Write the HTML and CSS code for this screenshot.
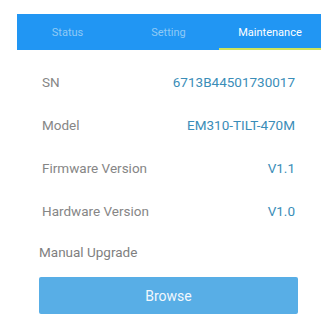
FILE: index.html
```html
<!DOCTYPE html>
<html>
<head>
<meta charset="utf-8">
<link rel="stylesheet" href="styles.css">
</head>
<body>
<div class="page">
  <div class="tabs">
    <div class="tab">Status</div>
    <div class="tab">Setting</div>
    <div class="tab active">Maintenance</div>
  </div>
  <div class="rows">
    <div class="row"><span class="label">SN</span><span class="value">6713B44501730017</span></div>
    <div class="row"><span class="label">Model</span><span class="value">EM310-TILT-470M</span></div>
    <div class="row"><span class="label">Firmware Version</span><span class="value">V1.1</span></div>
    <div class="row"><span class="label">Hardware Version</span><span class="value">V1.0</span></div>
  </div>
  <div class="upgrade">
    <div class="upgrade-label">Manual Upgrade</div>
    <div class="btn">Browse</div>
  </div>
</div>
</body>
</html>
```
FILE: styles.css
```css
html, body {
  margin: 0;
  padding: 0;
  background: #ffffff;
}
.page {
  width: 329px;
  height: 332px;
  font-family: Roboto, "Noto Sans", sans-serif;
  padding-top: 14px;
  box-sizing: border-box;
}
.tabs {
  margin-left: 17px;
  width: 304px;
  height: 36px;
  background: #2196f3;
  display: grid;
  grid-template-columns: 101px 101px 102px;
}
.tab {
  display: flex;
  align-items: center;
  justify-content: center;
  font-size: 11px;
  color: #8fcaf6;
  box-sizing: border-box;
  padding-top: 1px;
}
.tab.active {
  color: #ffffff;
  border-bottom: 2px solid #cfe35a;
  padding-top: 3px;
}
.rows {
  margin-top: 10px;
  padding: 0 34px 0 42px;
}
.row {
  height: 43px;
  display: flex;
  justify-content: space-between;
  align-items: center;
  font-size: 13.5px;
}
.label {
  color: #868686;
}
.value {
  color: #3a8db8;
}
.upgrade {
  margin-top: 8px;
  padding: 0 31px 0 39px;
}
.upgrade-label {
  font-size: 13.5px;
  color: #7f7f7f;
  height: 24px;
  display: flex;
  align-items: center;
}
.btn {
  margin-top: 13px;
  height: 37px;
  background: #58aee6;
  border-radius: 2px;
  color: #f2f8fd;
  font-size: 14px;
  display: flex;
  align-items: center;
  justify-content: center;
}
```
